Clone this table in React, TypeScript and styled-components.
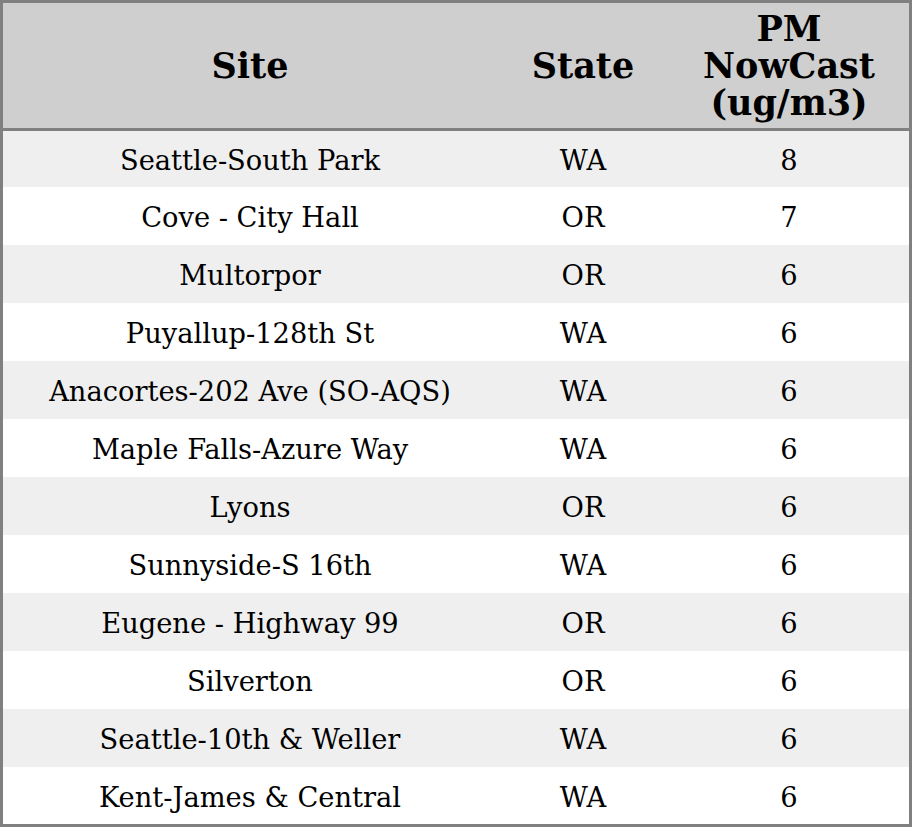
import React, { FC } from 'react';
import styled, { createGlobalStyle } from 'styled-components';

const GlobalStyle = createGlobalStyle`
  html, body {
    margin: 0;
    padding: 0;
    background: #ffffff;
  }
`;

const columns = '494px 172px 240px';

const Table = styled.div`
  width: 912px;
  height: 827px;
  box-sizing: border-box;
  border: 3px solid #808080;
  display: flex;
  flex-direction: column;
  font-family: 'DejaVu Serif', 'Liberation Serif', serif;
  color: #000000;
`;

const HeadRow = styled.div`
  display: grid;
  grid-template-columns: ${columns};
  height: 125px;
  background: #cfcfcf;
  border-bottom: 3px solid #808080;
`;

const HeadCell = styled.div`
  display: flex;
  align-items: center;
  justify-content: center;
  text-align: center;
  font-size: 35px;
  font-weight: bold;
  line-height: 37px;
`;

const Row = styled.div<{ $striped: boolean; $height: number }>`
  display: grid;
  grid-template-columns: ${columns};
  height: ${(props) => props.$height}px;
  background: ${(props) => (props.$striped ? '#efefef' : '#ffffff')};
`;

const Cell = styled.div`
  display: flex;
  align-items: center;
  justify-content: center;
  box-sizing: border-box;
  padding-top: 4px;
  font-size: 27.3px;
  line-height: 32px;
  white-space: nowrap;
`;

const rows: [string, string, string][] = [
  ['Seattle-South Park', 'WA', '8'],
  ['Cove - City Hall', 'OR', '7'],
  ['Multorpor', 'OR', '6'],
  ['Puyallup-128th St', 'WA', '6'],
  ['Anacortes-202 Ave (SO-AQS)', 'WA', '6'],
  ['Maple Falls-Azure Way', 'WA', '6'],
  ['Lyons', 'OR', '6'],
  ['Sunnyside-S 16th', 'WA', '6'],
  ['Eugene - Highway 99', 'OR', '6'],
  ['Silverton', 'OR', '6'],
  ['Seattle-10th & Weller', 'WA', '6'],
  ['Kent-James & Central', 'WA', '6'],
];

const rowHeight = (i: number) => {
  if (i === 0) return 56;
  if (i === rows.length - 1) return 57;
  return 58;
};

const App: FC = function App() {
  return (
    <>
      <GlobalStyle />
      <Table>
        <HeadRow>
          <HeadCell>Site</HeadCell>
          <HeadCell>State</HeadCell>
          <HeadCell>
            PM
            <br />
            NowCast
            <br />
            (ug/m3)
          </HeadCell>
        </HeadRow>
        {rows.map(([site, state, value], i) => (
          <Row key={site} $striped={i % 2 === 0} $height={rowHeight(i)}>
            <Cell>{site}</Cell>
            <Cell>{state}</Cell>
            <Cell>{value}</Cell>
          </Row>
        ))}
      </Table>
    </>
  );
};

export default App;
